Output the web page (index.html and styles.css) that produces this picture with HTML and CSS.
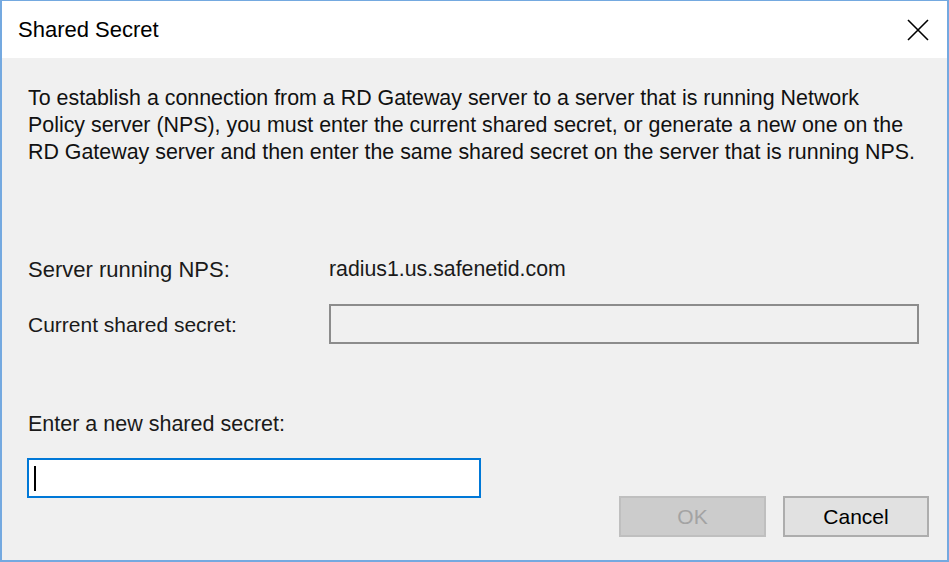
FILE: index.html
```html
<!DOCTYPE html>
<html>
<head>
<meta charset="utf-8">
<title>Shared Secret</title>
<link rel="stylesheet" href="styles.css">
</head>
<body>
<div class="window">
  <div class="titlebar">
    <span class="title">Shared Secret</span>
    <span class="close">
      <svg width="22" height="22" viewBox="0 0 22 22"><path d="M1 1 L21 21 M21 1 L1 21" stroke="#000" stroke-width="1.6" fill="none"/></svg>
    </span>
  </div>
  <div class="content">
    <p class="desc">To establish a connection from a RD Gateway server to a server that is running Network<br>Policy server (NPS), you must enter the current shared secret, or generate a new one on the<br>RD Gateway server and then enter the same shared secret on the server that is running NPS.</p>
    <div class="row server-row">
      <span class="label">Server running NPS:</span>
      <span class="value">radius1.us.safenetid.com</span>
    </div>
    <div class="row current-row">
      <span class="label">Current shared secret:</span>
      <div class="textbox disabled"></div>
    </div>
    <div class="label new-label">Enter a new shared secret:</div>
    <div class="bottom">
      <div class="textbox active"><span class="caret"></span></div>
      <div class="buttons">
        <button class="btn ok" disabled>OK</button>
        <button class="btn cancel">Cancel</button>
      </div>
    </div>
  </div>
</div>
</body>
</html>
```

FILE: styles.css
```css
html, body {
  margin: 0;
  padding: 0;
  background: #f0f0f0;
}
.window {
  width: 949px;
  height: 562px;
  box-sizing: border-box;
  border: 2px solid #74a9e0;
  border-top-width: 1px;
  background: #f0f0f0;
  display: flex;
  flex-direction: column;
  font-family: "Liberation Sans", Arial, sans-serif;
  color: #111;
}
.titlebar {
  height: 57px;
  flex: none;
  background: #fff;
  display: flex;
  align-items: center;
  justify-content: space-between;
  padding: 0 18px 0 16px;
}
.title {
  font-size: 22px;
  color: #000;
}
.close {
  display: flex;
  width: 22px;
  height: 22px;
}
.content {
  flex: 1;
  padding: 27px 18px 0 25px;
  display: flex;
  flex-direction: column;
}
.desc {
  margin: 0 0 0 1px;
  font-size: 21.4px;
  line-height: 27px;
  white-space: nowrap;
}
.row {
  display: flex;
  align-items: center;
  font-size: 21px;
}
.label {
  font-size: 21.5px;
  line-height: 27px;
  margin-left: 1px;
  color: #1a1a1a;
}
.row .label {
  width: 301px;
  flex: none;
}
.server-row {
  margin-top: 90px;
}
.server-row .label {
  font-size: 22px;
}
.current-row .label {
  font-size: 21px;
}
.value {
  font-size: 21.3px;
  line-height: 27px;
  color: #1a1a1a;
}
.current-row {
  margin-top: 21px;
}
.textbox {
  box-sizing: border-box;
  height: 40px;
}
.textbox.disabled {
  width: 590px;
  border: 2px solid #8c8c8c;
  background: #f0f0f0;
}
.new-label {
  margin-top: 67px;
}
.bottom {
  margin-top: 20px;
  display: flex;
  justify-content: space-between;
  align-items: flex-start;
}
.textbox.active {
  width: 454px;
  border: 2px solid #0078d7;
  background: #fff;
  display: flex;
  align-items: center;
  padding-left: 5px;
}
.caret {
  width: 2px;
  height: 25px;
  background: #000;
}
.buttons {
  display: flex;
  gap: 17px;
  margin-top: 38px;
}
.btn {
  box-sizing: border-box;
  width: 147px;
  height: 41px;
  font-family: "Liberation Sans", Arial, sans-serif;
  font-size: 21px;
  padding: 0;
  margin: 0;
}
.btn.ok {
  background: #cccccc;
  border: 2px solid #bfbfbf;
  color: #a3a3a3;
}
.btn.cancel {
  width: 146px;
  background: #e1e1e1;
  border: 2px solid #adadad;
  color: #000;
}
```
